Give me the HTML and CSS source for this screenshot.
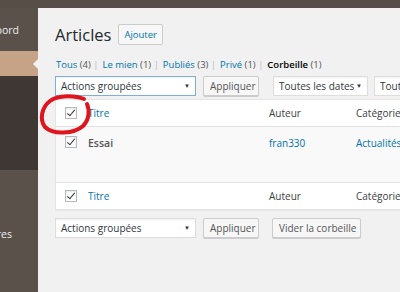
FILE: index.html
```html
<!DOCTYPE html>
<html lang="fr">
  <head>
    <meta charset="UTF-8" />
    <title>Articles</title>
    <link rel="stylesheet" href="styles.css">
  </head>
  <body>
    <div class="topbar"></div>
    <div class="page">
      <div class="menu">
        <div class="item dash"><span>Tableau de bord</span></div>
        <div class="item current"><span class="notch"></span></div>
        <div class="submenu"></div>
        <div class="item comments"><span>Commentaires</span></div>
      </div>
      <div class="main">
        <div class="head">
          <h1>Articles</h1>
          <button class="addnew">Ajouter</button>
        </div>
        <ul class="views">
          <li><a>Tous</a> <span class="count">(4)</span> <span class="sep">|</span></li>
          <li><a>Le mien</a> <span class="count">(1)</span> <span class="sep">|</span></li>
          <li><a>Publiés</a> <span class="count">(3)</span> <span class="sep">|</span></li>
          <li><a>Privé</a> <span class="count">(1)</span> <span class="sep">|</span></li>
          <li><b>Corbeille</b> <span class="count">(1)</span></li>
        </ul>
        <div class="actions">
          <div class="sel bulk focus">Actions groupées <span class="arrow">▼</span></div>
          <button class="btn apply">Appliquer</button>
          <div class="sel dates">Toutes les dates <span class="arrow">▼</span></div>
          <div class="sel cats">Toutes les catégories</div>
        </div>
        <table class="posts">
          <thead>
            <tr>
              <td class="cb"><span class="box checked"></span></td>
              <td class="title"><a>Titre</a></td>
              <td class="author">Auteur</td>
              <td>Catégories</td>
            </tr>
          </thead>
          <tbody>
            <tr class="alt">
              <td class="cb"><span class="box checked"></span></td>
              <td class="title"><strong>Essai</strong></td>
              <td class="author"><a>fran330</a></td>
              <td><a>Actualités</a></td>
            </tr>
          </tbody>
          <tfoot>
            <tr>
              <td class="cb"><span class="box checked"></span></td>
              <td class="title"><a>Titre</a></td>
              <td class="author">Auteur</td>
              <td>Catégories</td>
            </tr>
          </tfoot>
        </table>
        <div class="actions bottom">
          <div class="sel bulk">Actions groupées <span class="arrow">▼</span></div>
          <button class="btn apply">Appliquer</button>
          <button class="btn empty">Vider la corbeille</button>
        </div>
      </div>
    </div>
    <svg class="mark" width="400" height="292" viewBox="0 0 400 292">
      <path d="M84 99 C75 95 58 95 50 101 C42 107 39 119 45 127 C53 135 74 134 83 126 C89 120 90 111 87 104" fill="none" stroke="#e0141c" stroke-width="4" stroke-linecap="round" />
    </svg>
  </body>
</html>
```

FILE: styles.css
```css
body {
  margin: 0;
  width: 400px;
  height: 292px;
  overflow: hidden;
  background-color: #f1f1f1;
  font-family: "Open Sans", "Noto Sans", sans-serif;
  font-size: 10px;
  color: #444;
  position: relative;
}
.topbar {
  height: 8px;
  background-color: #574e48;
}
.page {
  display: flex;
  height: 284px;
}
.menu {
  width: 38px;
  flex-shrink: 0;
  background-color: #5a514b;
  overflow: hidden;
}
.item {
  display: flex;
  justify-content: flex-end;
  color: #eee;
  font-size: 10.5px;
  white-space: nowrap;
}
.item span {
  flex-shrink: 0;
}
.dash {
  padding: 15px 19px 0 0;
  height: 28px;
}
.current {
  height: 25px;
  background-color: #c6a386;
  position: relative;
}
.notch {
  position: absolute;
  right: 0;
  top: 8px;
  border-top: 5px solid transparent;
  border-bottom: 5px solid transparent;
  border-right: 5px solid #f1f1f1;
}
.submenu {
  height: 94px;
  background-color: #3e3733;
}
.comments {
  padding: 57px 26px 0 0;
}
.main {
  flex: 1;
  padding-left: 17px;
  overflow: hidden;
}
.head {
  display: flex;
  align-items: center;
  margin-top: 16px;
  height: 21px;
}
h1 {
  margin: 0;
  font-weight: 400;
  font-size: 16.5px;
  color: #23282d;
}
.addnew {
  margin-left: 7px;
  height: 21px;
  padding: 0 5px;
  border: 1px solid #ccc;
  border-radius: 2px;
  background-color: #f7f7f7;
  color: #0073aa;
  font-family: inherit;
  font-size: 9.5px;
}
.views {
  list-style: none;
  margin: 13px 0 0 1px;
  padding: 0;
  display: flex;
  gap: 4px;
  font-size: 9.5px;
  line-height: 13px;
}
a {
  color: #0073aa;
}
.count {
  color: #555;
}
.sep {
  color: #bbb;
}
.views b {
  color: #000;
  font-weight: 600;
}
.actions {
  display: flex;
  margin-top: 5px;
  height: 20px;
  white-space: nowrap;
}
.actions > * {
  flex-shrink: 0;
}
.sel {
  box-sizing: border-box;
  height: 20px;
  border: 1px solid #ddd;
  background-color: #fff;
  padding: 0 5px;
  line-height: 18px;
  font-size: 10px;
  color: #32373c;
  display: flex;
  justify-content: space-between;
  box-shadow: inset 0 1px 2px rgba(0, 0, 0, 0.06);
}
.sel.focus {
  border-color: #7fb0d4;
}
.arrow {
  font-size: 6px;
  color: #333;
}
.bulk {
  width: 141px;
}
.dates {
  width: 95px;
  margin-left: 14px;
}
.cats {
  width: 110px;
  margin-left: 6px;
}
.btn {
  box-sizing: border-box;
  height: 20px;
  border: 1px solid #ccc;
  border-radius: 2px;
  background-color: #f7f7f7;
  color: #555;
  font-family: inherit;
  font-size: 10px;
  padding: 0 6px;
  box-shadow: 0 1px 0 #ccc;
}
.apply {
  width: 56px;
  margin-left: 7px;
}
.empty {
  width: 89px;
  margin-left: 13px;
}
.posts {
  margin-top: 3px;
  border-collapse: collapse;
  border: 1px solid #e5e5e5;
  background-color: #fff;
  width: 380px;
  table-layout: fixed;
  box-shadow: 0 1px 1px rgba(0, 0, 0, 0.04);
}
.posts td {
  padding: 0 5px;
  font-size: 10px;
  color: #3c3f44;
}
.posts thead td,
.posts tfoot td {
  height: 26px;
  vertical-align: middle;
}
.posts thead tr {
  border-bottom: 1px solid #e1e1e1;
}
.posts tfoot tr {
  border-top: 1px solid #e1e1e1;
}
.posts tbody tr {
  height: 56px;
}
.posts tbody td {
  vertical-align: top;
  padding-top: 9px;
}
.alt {
  background-color: #f9f9f9;
}
.posts .cb {
  width: 18px;
  padding: 0 0 0 9px;
}
.posts tbody .cb {
  padding-top: 9px;
}
.title {
  width: 171px;
}
.author {
  width: 77px;
}
.title strong {
  font-weight: 600;
  color: #555;
  font-size: 10.5px;
}
.box {
  display: block;
  width: 12px;
  height: 12px;
  box-sizing: border-box;
  border: 1px solid #b4b9be;
  background-color: #fff;
  position: relative;
  box-shadow: inset 0 1px 2px rgba(0, 0, 0, 0.1);
}
.box.checked::after {
  content: "";
  position: absolute;
  left: 3px;
  top: 0px;
  width: 3px;
  height: 7px;
  border-right: 1.5px solid #333;
  border-bottom: 1.5px solid #333;
  transform: rotate(40deg);
}
.actions.bottom {
  margin-top: 8px;
}
.mark {
  position: absolute;
  left: 0;
  top: 0;
  pointer-events: none;
}
```
